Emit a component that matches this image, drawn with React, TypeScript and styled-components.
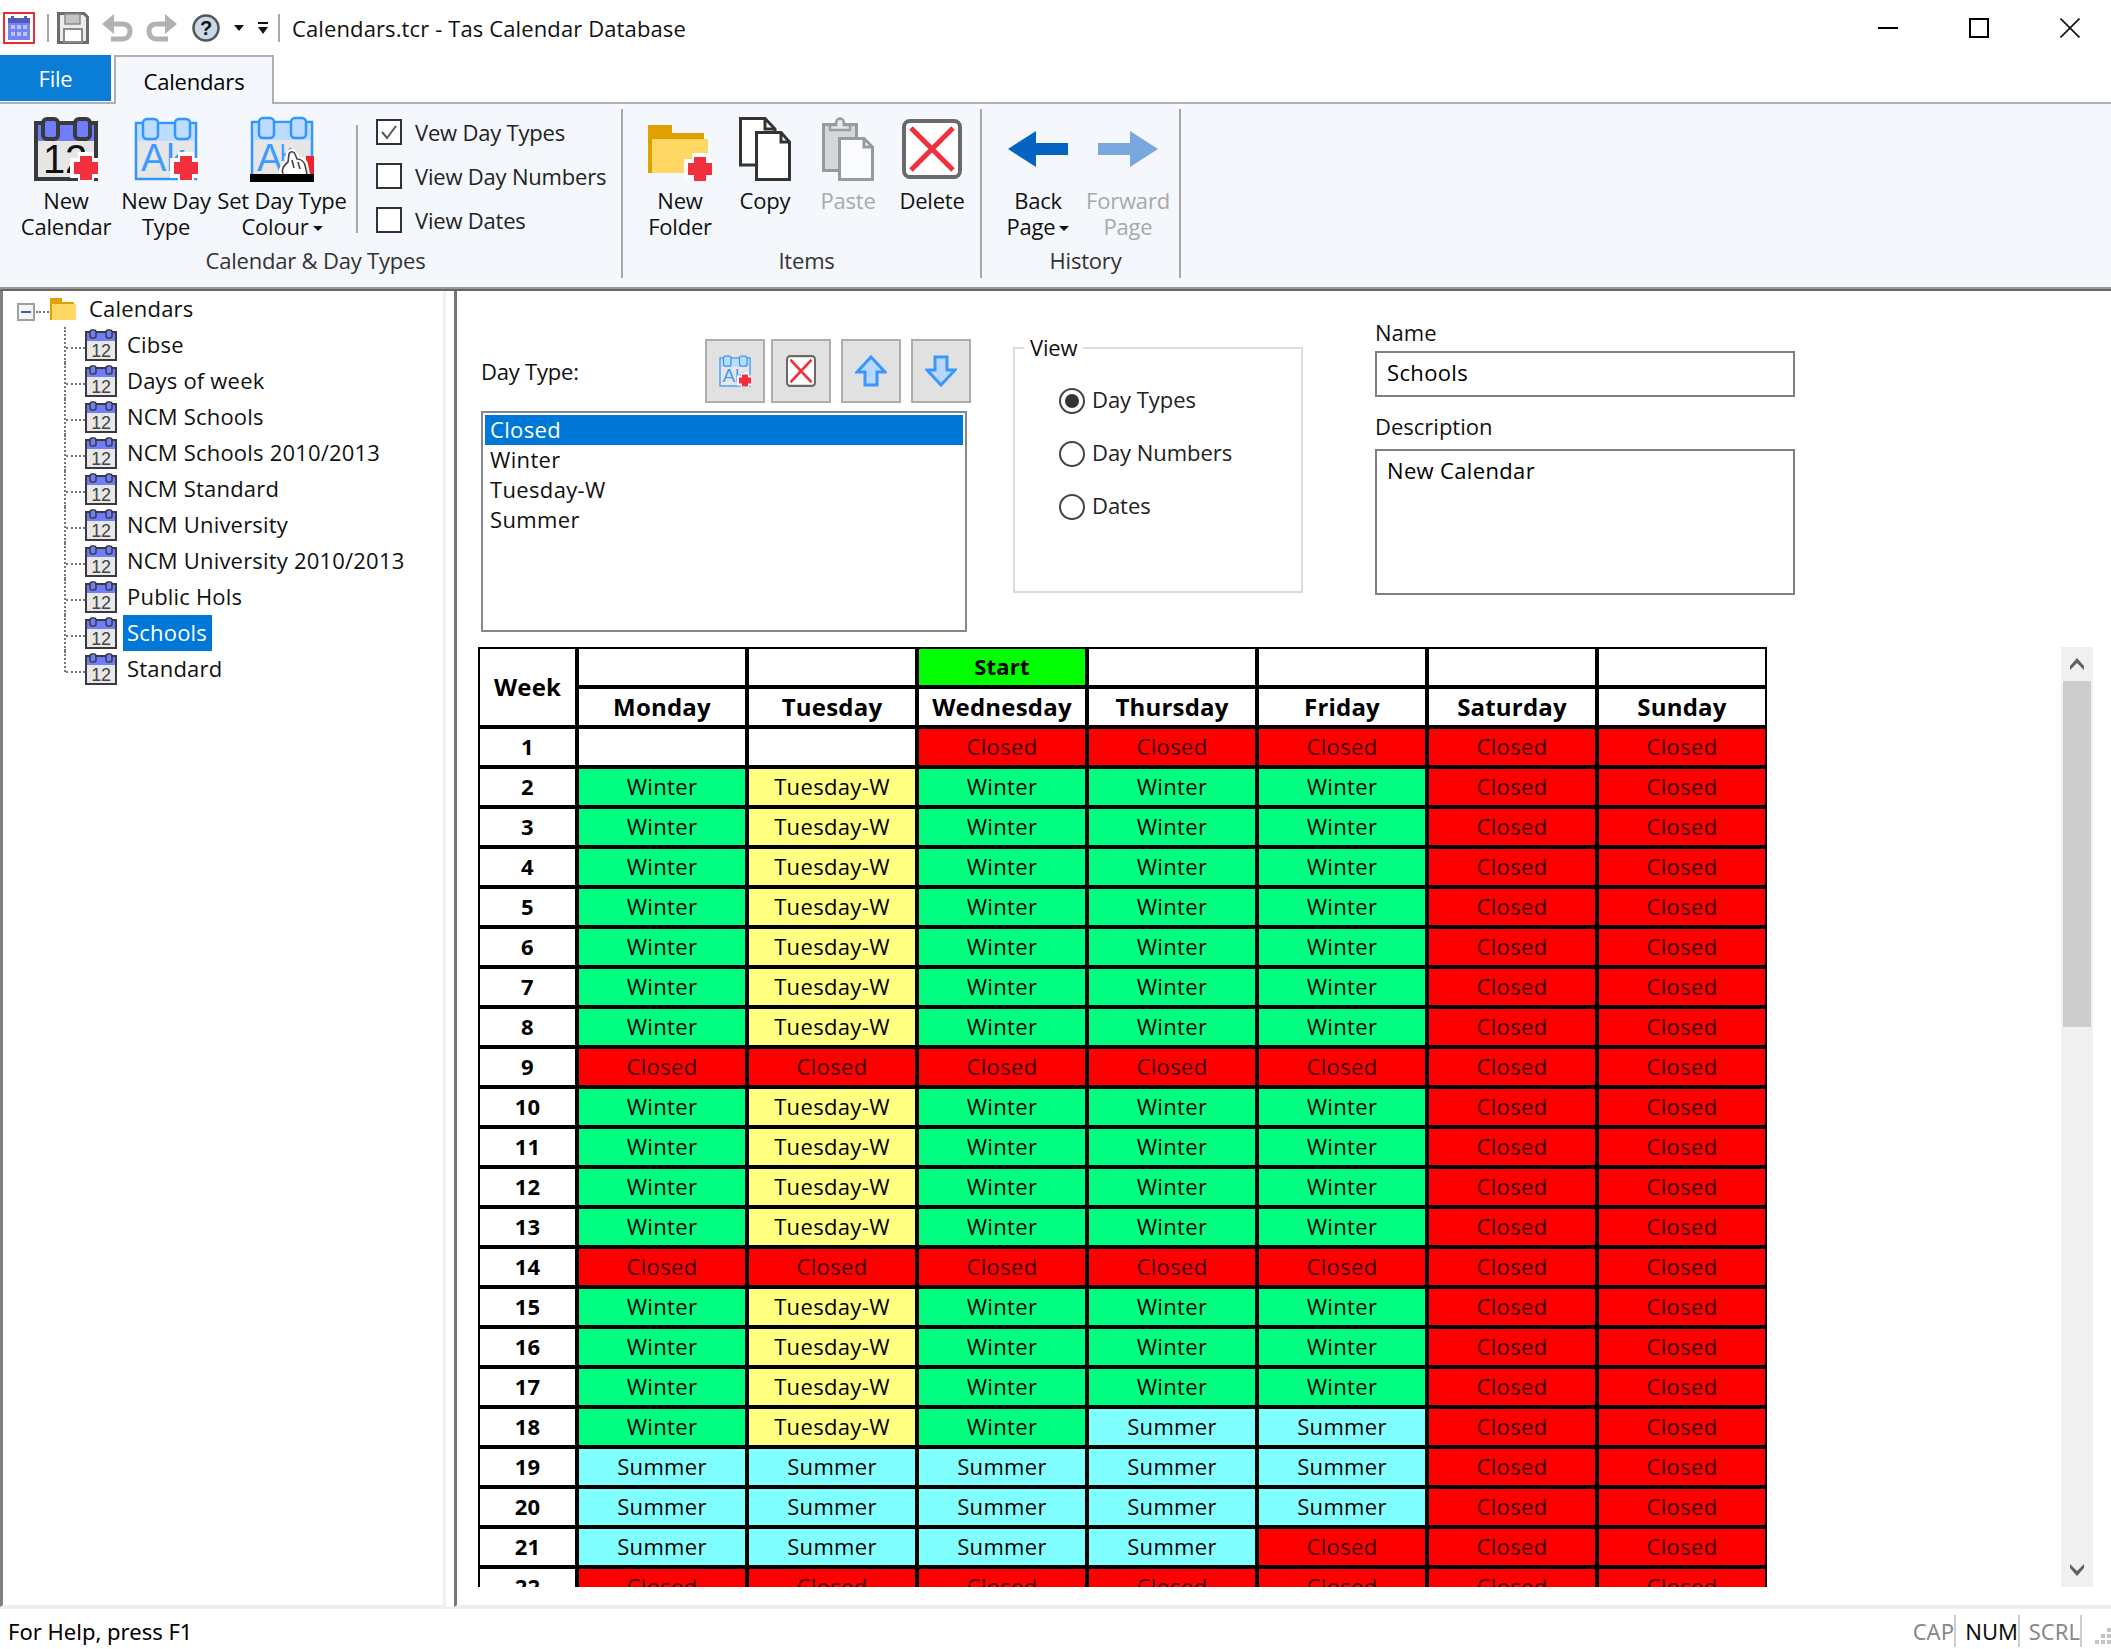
import { Fragment, ReactElement } from 'react';
import styled, { createGlobalStyle } from 'styled-components';

type DayKind = 'blank' | 'closed' | 'winter' | 'tuesday' | 'summer';

const DAY_COLOURS: Record<DayKind, string> = {
    blank: '#ffffff',
    closed: '#ff0000',
    winter: '#00ff80',
    tuesday: '#ffff80',
    summer: '#80ffff',
};

const DAY_LABELS: Record<DayKind, string> = {
    blank: '',
    closed: 'Closed',
    winter: 'Winter',
    tuesday: 'Tuesday-W',
    summer: 'Summer',
};

const WORK: DayKind[] = ['winter', 'tuesday', 'winter', 'winter', 'winter', 'closed', 'closed'];
const SHUT: DayKind[] = ['closed', 'closed', 'closed', 'closed', 'closed', 'closed', 'closed'];
const HOLS: DayKind[] = ['summer', 'summer', 'summer', 'summer', 'summer', 'closed', 'closed'];

const WEEKS: DayKind[][] = [
    ['blank', 'blank', 'closed', 'closed', 'closed', 'closed', 'closed'],
    WORK, WORK, WORK, WORK, WORK, WORK, WORK,
    SHUT,
    WORK, WORK, WORK, WORK,
    SHUT,
    WORK, WORK, WORK,
    ['winter', 'tuesday', 'winter', 'summer', 'summer', 'closed', 'closed'],
    HOLS, HOLS,
    ['summer', 'summer', 'summer', 'summer', 'closed', 'closed', 'closed'],
    SHUT,
];

const DAYS = ['Monday', 'Tuesday', 'Wednesday', 'Thursday', 'Friday', 'Saturday', 'Sunday'];

const CALENDARS = [
    'Cibse',
    'Days of week',
    'NCM Schools',
    'NCM Schools 2010/2013',
    'NCM Standard',
    'NCM University',
    'NCM University 2010/2013',
    'Public Hols',
    'Schools',
    'Standard',
];

const GlobalStyle = createGlobalStyle`
    html, body {
        margin: 0;
        padding: 0;
        background: #fff;
    }
    * {
        box-sizing: border-box;
    }
`;

const Page = styled.div`
    width: 2111px;
    height: 1649px;
    display: flex;
    flex-direction: column;
    overflow: hidden;
    background: #fff;
    color: #000;
    font-family: 'Open Sans', 'Noto Sans', sans-serif;
    font-size: 22px;
    letter-spacing: -0.2px;
`;

const TitleBar = styled.div`
    height: 55px;
    display: flex;
    align-items: center;
    padding-left: 3px;
`;

const TitleDivider = styled.div<{ $left: number }>`
    width: 2px;
    height: 28px;
    margin-left: ${p => p.$left}px;
    background: #a8a8a8;
`;

const QuickIcon = styled.div<{ $left: number }>`
    display: flex;
    margin-left: ${p => p.$left}px;
`;

const TitleText = styled.div`
    margin-left: 12px;
    color: #111;
    letter-spacing: 0.12px;
`;

const WindowButtons = styled.div`
    margin-left: auto;
    margin-right: 31px;
    display: flex;
    align-items: center;
    gap: 71px;
`;

const TabStrip = styled.div`
    height: 47px;
    display: flex;
    align-items: flex-end;
`;

const FileTab = styled.div`
    width: 111px;
    height: 46px;
    margin-bottom: 1px;
    display: flex;
    align-items: center;
    justify-content: center;
    background: #0a7ed6;
    color: #fff;
`;

const ActiveTab = styled.div`
    width: 160px;
    height: 49px;
    margin-left: 3px;
    margin-bottom: -2px;
    display: flex;
    align-items: center;
    justify-content: center;
    background: #f4f7fb;
    border: 2px solid #b0b0b0;
    border-bottom: none;
    position: relative;
    z-index: 1;
`;

const Ribbon = styled.div`
    height: 187px;
    display: flex;
    flex-shrink: 0;
    background: #f4f7fb;
    border-top: 2px solid #b0b0b0;
    border-bottom: 2px solid #999;
`;

const RibbonGroup = styled.div<{ $width: number }>`
    width: ${p => p.$width}px;
    height: 169px;
    margin-top: 5px;
    display: flex;
    flex-direction: column;
    border-right: 2px solid #a8a8a8;
`;

const GroupRow = styled.div<{ $left: number }>`
    height: 138px;
    display: flex;
    padding-left: ${p => p.$left}px;
`;

const GroupLabel = styled.div`
    height: 26px;
    line-height: 26px;
    padding-left: 10px;
    text-align: center;
    color: #333;
`;

const LargeButton = styled.div<{ $width: number; $disabled?: boolean }>`
    width: ${p => p.$width}px;
    padding-top: 8px;
    display: flex;
    flex-direction: column;
    align-items: center;
    color: ${p => (p.$disabled ? '#a9a9a9' : '#111')};
`;

const IconSlot = styled.div`
    height: 64px;
    display: flex;
    align-items: center;
    justify-content: center;
`;

const ButtonLabel = styled.div`
    margin-top: 6px;
    line-height: 26px;
    text-align: center;
    white-space: nowrap;
`;

const Caret = styled.span`
    display: inline-block;
    width: 0;
    height: 0;
    margin-left: 4px;
    vertical-align: 4px;
    border-left: 5px solid transparent;
    border-right: 5px solid transparent;
    border-top: 5px solid #111;
`;

const RibbonDivider = styled.div`
    width: 2px;
    height: 108px;
    margin: 16px 18px 0 6px;
    background: #a8a8a8;
`;

const CheckColumn = styled.div`
    padding-top: 10px;
    display: flex;
    flex-direction: column;
    gap: 18px;
`;

const CheckRow = styled.div`
    height: 26px;
    display: flex;
    align-items: center;
    gap: 13px;
    color: #222;
`;

const CheckBox = styled.div`
    width: 26px;
    height: 26px;
    display: flex;
    align-items: center;
    justify-content: center;
    background: #fff;
    border: 2px solid #333;
`;

const Body = styled.div`
    flex: 1;
    min-height: 0;
    display: flex;
    border-top: 2px solid #666;
`;

const TreePanel = styled.div`
    width: 446px;
    border-left: 3px solid #808080;
    border-right: 3px solid #f0f0f0;
    border-bottom: 2px solid #eee;
`;

const TreeRoot = styled.div`
    height: 36px;
    display: flex;
    align-items: center;
`;

const ExpandBox = styled.div`
    width: 18px;
    height: 18px;
    margin: 6px 0 0 14px;
    display: flex;
    align-items: center;
    justify-content: center;
    background: #f6f6f6;
    border: 2px solid #a0a0a0;

    &::after {
        content: '';
        width: 10px;
        height: 2px;
        background: #3f5fb0;
    }
`;

const RootDots = styled.div`
    width: 13px;
    margin: 6px 1px 0 1px;
    border-top: 2px dotted #777;
`;

const TreeText = styled.div<{ $selected?: boolean }>`
    height: 36px;
    line-height: 34px;
    padding: 0 5px 0 4px;
    white-space: nowrap;
    letter-spacing: 0.2px;
    background: ${p => (p.$selected ? '#0078d7' : 'transparent')};
    color: ${p => (p.$selected ? '#fff' : '#111')};
`;

const TreeRootText = styled(TreeText)`
    margin-left: 9px;
`;

const TreeRow = styled.div<{ $last?: boolean }>`
    position: relative;
    height: 36px;
    padding-left: 82px;
    display: flex;
    align-items: center;
    gap: 6px;

    &::before {
        content: '';
        position: absolute;
        left: 61px;
        top: 0;
        height: ${p => (p.$last ? '21px' : '36px')};
        border-left: 2px dotted #777;
    }

    &::after {
        content: '';
        position: absolute;
        left: 63px;
        top: 20px;
        width: 19px;
        border-top: 2px dotted #777;
    }
`;

const Splitter = styled.div`
    width: 8px;
    background: #fff;
`;

const DetailPane = styled.div`
    flex: 1;
    display: flex;
    flex-direction: column;
    border-left: 3px solid #777;
    border-bottom: 2px solid #eee;
`;

const TopRow = styled.div`
    height: 356px;
    flex-shrink: 0;
    display: flex;
    padding-left: 24px;
`;

const DayTypeColumn = styled.div`
    width: 486px;
    padding-top: 48px;
`;

const DayTypeTools = styled.div`
    display: flex;
    align-items: center;
    height: 64px;
    width: 500px;
`;

const DayTypeLabel = styled.div`
    width: 224px;
    color: #111;
`;

const ToolButton = styled.div<{ $left: number }>`
    width: 60px;
    height: 64px;
    margin-left: ${p => p.$left}px;
    display: flex;
    align-items: center;
    justify-content: center;
    background: #e1e1e1;
    border: 2px solid #adadad;
`;

const ListBox = styled.div`
    height: 221px;
    margin-top: 8px;
    padding: 2px;
    background: #fff;
    border: 2px solid #828790;
`;

const ListItem = styled.div<{ $selected?: boolean }>`
    height: 30px;
    line-height: 29px;
    padding-left: 5px;
    letter-spacing: 0.35px;
    background: ${p => (p.$selected ? '#0078d7' : 'transparent')};
    color: ${p => (p.$selected ? '#fff' : '#111')};
`;

const ViewGroup = styled.div`
    position: relative;
    width: 290px;
    height: 246px;
    margin: 56px 0 0 46px;
    padding: 25px 0 0 44px;
    border: 2px solid #dcdcdc;
`;

const ViewLegend = styled.div`
    position: absolute;
    left: 9px;
    top: -15px;
    padding: 0 6px;
    line-height: 26px;
    background: #fff;
    color: #111;
`;

const RadioRow = styled.div`
    height: 53px;
    display: flex;
    align-items: center;
    gap: 7px;
    color: #222;
    letter-spacing: -0.05px;
`;

const RadioText = styled.span`
    margin-top: -3px;
`;

const Radio = styled.div<{ $checked?: boolean }>`
    width: 26px;
    height: 26px;
    display: flex;
    align-items: center;
    justify-content: center;
    border: 2px solid #444;
    border-radius: 50%;

    &::after {
        content: '';
        width: 14px;
        height: 14px;
        border-radius: 50%;
        background: ${p => (p.$checked ? '#333' : 'transparent')};
    }
`;

const FieldColumn = styled.div`
    width: 420px;
    margin-left: 72px;
    padding-top: 27px;
`;

const FieldLabel = styled.div<{ $top?: number }>`
    height: 30px;
    line-height: 28px;
    margin-top: ${p => p.$top ?? 0}px;
    letter-spacing: 0px;
    color: #111;
`;

const NameBox = styled.div`
    height: 46px;
    margin-top: 3px;
    padding-left: 10px;
    line-height: 38px;
    letter-spacing: 0.35px;
    border: 2px solid #808080;
`;

const DescriptionBox = styled.div`
    height: 146px;
    margin-top: 7px;
    padding: 4px 0 0 10px;
    line-height: 30px;
    letter-spacing: 0.35px;
    border: 2px solid #808080;
`;

const GridRow = styled.div`
    flex: 1;
    min-height: 0;
    display: flex;
    padding-left: 21px;
`;

const GridClip = styled.div`
    width: 1289px;
    height: 940px;
    overflow: hidden;
`;

const WeekGrid = styled.div`
    display: grid;
    grid-template-columns: 95px repeat(7, 166px);
    grid-auto-rows: 36px;
    gap: 4px;
    padding: 2px;
    background: #000;
    font-size: 22px;
`;

const GridCell = styled.div<{ $bg?: string; $closed?: boolean }>`
    display: flex;
    align-items: center;
    justify-content: center;
    padding-bottom: 2px;
    background: ${p => p.$bg ?? '#fff'};
    color: ${p => (p.$closed ? '#3a0000' : '#000')};
    letter-spacing: 0.35px;
`;

const WeekNumber = styled(GridCell)`
    font-weight: 700;
    letter-spacing: 0.2px;
`;

const DayHeading = styled(GridCell)<{ $span?: boolean }>`
    font-size: 24px;
    font-weight: 700;
    letter-spacing: 0.2px;
    grid-row: ${p => (p.$span ? 'span 2' : 'auto')};
`;

const Scrollbar = styled.div`
    width: 32px;
    height: 940px;
    margin-left: 294px;
    display: flex;
    flex-direction: column;
    align-items: center;
    background: #f0f0f0;
`;

const ScrollArrow = styled.div<{ $bottom?: boolean }>`
    height: 34px;
    display: flex;
    align-items: center;
    justify-content: center;
    margin-top: ${p => (p.$bottom ? 'auto' : '0')};
`;

const ScrollThumb = styled.div`
    width: 28px;
    height: 346px;
    background: #cdcdcd;
`;

const StatusBar = styled.div`
    height: 42px;
    flex-shrink: 0;
    display: flex;
    align-items: center;
    padding: 3px 0 0 8px;
    border-top: 2px solid #f0f0f0;
    font-family: 'Noto Sans', sans-serif;
    font-size: 22px;
    letter-spacing: 0;
`;

const StatusPanes = styled.div`
    margin-left: auto;
    display: flex;
    align-items: center;
`;

const StatusPane = styled.div<{ $width: number; $active?: boolean }>`
    width: ${p => p.$width}px;
    height: 32px;
    line-height: 32px;
    text-align: right;
    white-space: nowrap;
    border-right: 2px solid #ccc;
    color: ${p => (p.$active ? '#111' : '#888')};
`;

const Grip = styled.div`
    display: flex;
    margin: 10px 0 0 13px;
`;

function RedPlus({ x, y }: { x: number; y: number }): ReactElement {
    // x, y is the middle of the cross
    return (
        <g transform={`translate(${x} ${y})`}>
            <path
                d="M-8 -16H8V-10H16V10H8V16H-8V10H-16V-10H-8Z"
                fill="#fff"
            />
            <path d="M-6 -12H6V-6H12V6H6V12H-6V6H-12V-6H-6Z" fill="#f0303c" />
        </g>
    );
}

function CalendarBase({ dark }: { dark: boolean }): ReactElement {
    const line = dark ? '#3a3a3e' : '#2f97ff';
    const head = dark ? '#6f7dfb' : '#bddcff';
    const width = dark ? 4 : 2.5;
    return (
        <>
            <rect x="2" y="6" width="60" height="56" fill="#e6e6e6" stroke={line} strokeWidth={width} />
            <rect x="4" y="8" width="56" height="16" fill={head} />
            <rect x="9" y="2" width="15" height="20" rx="4" fill={head} stroke={line} strokeWidth={width} />
            <rect x="41" y="2" width="15" height="20" rx="4" fill={head} stroke={line} strokeWidth={width} />
        </>
    );
}

function NewCalendarIcon(): ReactElement {
    return (
        <svg width="64" height="64" viewBox="0 0 64 64">
            <CalendarBase dark />
            <text x="9" y="56" fontFamily="Liberation Sans" fontSize="40" fill="#111">12</text>
            <RedPlus x={52} y={51} />
        </svg>
    );
}

function NewDayTypeIcon({ size = 64 }: { size?: number }): ReactElement {
    return (
        <svg width={size} height={size} viewBox="0 0 64 64">
            <CalendarBase dark={false} />
            <text x="7" y="54" fontFamily="Liberation Sans" fontSize="38" fill="#3d9bff">Ak</text>
            <RedPlus x={52} y={51} />
        </svg>
    );
}

function SetColourIcon(): ReactElement {
    return (
        <svg width="64" height="66" viewBox="0 0 64 66">
            <CalendarBase dark={false} />
            <text x="7" y="55" fontFamily="Liberation Sans" fontSize="38" fill="#3d9bff">A</text>
            <text x="30" y="45" fontFamily="Liberation Sans" fontSize="24" fill="#3d9bff">k</text>
            <path d="M56 40h8v18h-8z" fill="#f0202c" />
            <path d="M29 58c-1-5 2-10 6-13l1-9c2-4 8-4 10 0l3 4c5 1 8 4 9 8l2 10z" fill="#fff" />
            <path
                d="M33 58c-2-5 1-9 5-12l1-8c1-3 5-3 6 0l2 5c4 0 7 3 8 6l2 9M42 44l2 8M48 46l2 7"
                fill="none"
                stroke="#444"
                strokeWidth="1.6"
            />
            <rect x="0" y="58" width="64" height="8" fill="#000" />
        </svg>
    );
}

function TreeCalendarIcon(): ReactElement {
    return (
        <svg width="32" height="32" viewBox="0 0 32 32">
            <rect x="1" y="3" width="30" height="28" fill="#e8e8e8" stroke="#3a3a3e" strokeWidth="2" />
            <rect x="2" y="4" width="28" height="8" fill="#6f7dfb" />
            <rect x="5" y="1" width="6" height="8" rx="2" fill="#6f7dfb" stroke="#3a3a3e" strokeWidth="1.5" />
            <rect x="21" y="1" width="6" height="8" rx="2" fill="#6f7dfb" stroke="#3a3a3e" strokeWidth="1.5" />
            <text x="16" y="28" textAnchor="middle" fontFamily="Liberation Sans" fontSize="18" fill="#444">12</text>
        </svg>
    );
}

function TreeFolderIcon(): ReactElement {
    return (
        <svg width="26" height="22" viewBox="0 0 26 22">
            <path d="M0 0H12V4H24V22H0Z" fill="#e0a000" />
            <rect x="2" y="6" width="24" height="16" fill="#ffd764" />
        </svg>
    );
}

function FolderIcon(): ReactElement {
    return (
        <svg width="64" height="64" viewBox="0 0 64 64">
            <path d="M0 8H24V16H56V56H0Z" fill="#e0a000" />
            <rect x="4" y="22" width="56" height="34" fill="#ffd764" />
            <RedPlus x={52} y={52} />
        </svg>
    );
}

function CopyIcon(): ReactElement {
    return (
        <svg width="52" height="64" viewBox="0 0 52 64">
            <path d="M1.5 1.5H26L36 12V48H1.5Z" fill="#fff" stroke="#333" strokeWidth="3" />
            <path d="M26 1.5V12H36" fill="none" stroke="#333" strokeWidth="3" />
            <path d="M17.5 15.5H42L50.5 25V62.5H17.5Z" fill="#fff" stroke="#333" strokeWidth="3" />
            <path d="M42 15.5V25H50.5" fill="none" stroke="#333" strokeWidth="3" />
        </svg>
    );
}

function PasteIcon(): ReactElement {
    return (
        <svg width="52" height="64" viewBox="0 0 52 64">
            <rect x="1.5" y="7.5" width="33" height="46" fill="#d3d6db" stroke="#9a9a9a" strokeWidth="3" />
            <path d="M8 13V8H14C14 3 15 1.5 18 1.5S22 3 22 8H28V13Z" fill="#e4e6ea" stroke="#9a9a9a" strokeWidth="2.5" />
            <path d="M17.5 21.5H42L50.5 30V62.5H17.5Z" fill="#f9fbfe" stroke="#9a9a9a" strokeWidth="3" />
            <path d="M42 21.5V30H50.5" fill="none" stroke="#9a9a9a" strokeWidth="3" />
        </svg>
    );
}

function DeleteIcon({ width = 60, height = 60 }: { width?: number; height?: number }): ReactElement {
    return (
        <svg width={width} height={height} viewBox="0 0 60 60" preserveAspectRatio="none">
            <rect x="2" y="2" width="56" height="56" rx="6" fill="#fff" stroke="#6a6a6a" strokeWidth="4" />
            <path d="M9 9L51 51M51 9L9 51" stroke="#f0303c" strokeWidth="5" />
        </svg>
    );
}

function BackArrow({ flip, colour }: { flip?: boolean; colour: string }): ReactElement {
    return (
        <svg width="60" height="36" viewBox="0 0 60 36" style={flip ? { transform: 'scaleX(-1)' } : undefined}>
            <path d="M0 18L28 0V12H60V24H28V36Z" fill={colour} />
        </svg>
    );
}

function SmallArrow({ down }: { down?: boolean }): ReactElement {
    return (
        <svg width="32" height="32" viewBox="0 0 32 32" style={down ? { transform: 'scaleY(-1)' } : undefined}>
            <path d="M16 2L30 17H22V30H10V17H2Z" fill="#b8d8ff" stroke="#3a96ff" strokeWidth="3" />
        </svg>
    );
}

function TitleCalendar(): ReactElement {
    return (
        <svg width="32" height="32" viewBox="0 0 32 32">
            <rect x="1" y="1" width="30" height="30" fill="#fff" stroke="#ee2a33" strokeWidth="2" />
            <rect x="5" y="6" width="22" height="22" fill="#7583f5" />
            <rect x="5" y="6" width="22" height="5" fill="#4f5bc0" />
            <rect x="8" y="4" width="3" height="5" fill="#4f5bc0" />
            <rect x="21" y="4" width="3" height="5" fill="#4f5bc0" />
            <path d="M8 13h4v4H8zM14 13h4v4h-4zM20 13h4v4h-4zM8 20h4v4H8zM14 20h4v4h-4zM20 20h4v4h-4z" fill="#bcc3ff" />
        </svg>
    );
}

function SaveIcon(): ReactElement {
    return (
        <svg width="32" height="32" viewBox="0 0 32 32">
            <path d="M1.5 1.5H27L30.5 5V30.5H1.5Z" fill="#ebebeb" stroke="#6b6b6b" strokeWidth="3" />
            <rect x="8" y="2" width="15" height="10" fill="#c4c4c4" stroke="#8a8a8a" strokeWidth="1.5" />
            <rect x="7" y="17" width="18" height="13" fill="#fff" stroke="#8a8a8a" strokeWidth="2" />
        </svg>
    );
}

function UndoIcon({ flip }: { flip?: boolean }): ReactElement {
    return (
        <svg width="31" height="28" viewBox="0 0 31 28" style={flip ? { transform: 'scaleX(-1)' } : undefined}>
            <path d="M0 10L12 0V20Z" fill="#b2b2b2" />
            <path d="M10 10H20C26 10 28 13 28 17S26 25 20 25H9" fill="none" stroke="#b2b2b2" strokeWidth="5" />
        </svg>
    );
}

function HelpIcon(): ReactElement {
    return (
        <svg width="28" height="28" viewBox="0 0 28 28">
            <circle cx="14" cy="14" r="12.5" fill="#cbd8e8" stroke="#555" strokeWidth="2.5" />
            <text x="14" y="21" textAnchor="middle" fontFamily="Liberation Sans" fontWeight="700" fontSize="20" fill="#111">?</text>
        </svg>
    );
}

function DropCaret(): ReactElement {
    return (
        <svg width="10" height="6" viewBox="0 0 10 6">
            <path d="M0 0H10L5 6Z" fill="#111" />
        </svg>
    );
}

function CustomiseCaret(): ReactElement {
    return (
        <svg width="10" height="12" viewBox="0 0 10 12">
            <rect width="10" height="2" fill="#111" />
            <path d="M0 5H10L5 12Z" fill="#111" />
        </svg>
    );
}

function ScrollChevron({ down }: { down?: boolean }): ReactElement {
    return (
        <svg width="14" height="12" viewBox="0 0 14 12" style={down ? { transform: 'scaleY(-1)' } : undefined}>
            <path d="M7 0L14 8V12L7 5L0 12V8Z" fill="#606060" />
        </svg>
    );
}

function GripDots(): ReactElement {
    return (
        <svg width="16" height="16" viewBox="0 0 16 16">
            <path d="M12 0h4v4h-4zM6 6h4v4H6zM12 6h4v4h-4zM0 12h4v4H0zM6 12h4v4H6zM12 12h4v4h-4z" fill="#c4c4c4" />
        </svg>
    );
}

function App(): ReactElement {
    return (
        <Page>
            <GlobalStyle />
            <TitleBar>
                <TitleCalendar />
                <TitleDivider $left={12} />
                <QuickIcon $left={8}><SaveIcon /></QuickIcon>
                <QuickIcon $left={13}><UndoIcon /></QuickIcon>
                <QuickIcon $left={13}><UndoIcon flip /></QuickIcon>
                <QuickIcon $left={15}><HelpIcon /></QuickIcon>
                <QuickIcon $left={14}><DropCaret /></QuickIcon>
                <QuickIcon $left={14}><CustomiseCaret /></QuickIcon>
                <TitleDivider $left={10} />
                <TitleText>Calendars.tcr - Tas Calendar Database</TitleText>
                <WindowButtons>
                    <svg width="20" height="20" viewBox="0 0 20 20">
                        <rect y="9" width="20" height="2" fill="#000" />
                    </svg>
                    <svg width="20" height="20" viewBox="0 0 20 20">
                        <rect x="1" y="1" width="18" height="18" fill="none" stroke="#000" strokeWidth="2" />
                    </svg>
                    <svg width="20" height="20" viewBox="0 0 20 20">
                        <path d="M0.5 0.5L19.5 19.5M19.5 0.5L0.5 19.5" stroke="#111" strokeWidth="1.6" />
                    </svg>
                </WindowButtons>
            </TitleBar>

            <TabStrip>
                <FileTab>File</FileTab>
                <ActiveTab>Calendars</ActiveTab>
            </TabStrip>

            <Ribbon>
                <RibbonGroup $width={623}>
                    <GroupRow $left={14}>
                        <LargeButton $width={104}>
                            <IconSlot><NewCalendarIcon /></IconSlot>
                            <ButtonLabel>New<br />Calendar</ButtonLabel>
                        </LargeButton>
                        <LargeButton $width={96}>
                            <IconSlot><NewDayTypeIcon /></IconSlot>
                            <ButtonLabel>New Day<br />Type</ButtonLabel>
                        </LargeButton>
                        <LargeButton $width={136}>
                            <IconSlot><SetColourIcon /></IconSlot>
                            <ButtonLabel>Set Day Type<br />Colour<Caret /></ButtonLabel>
                        </LargeButton>
                        <RibbonDivider />
                        <CheckColumn>
                            <CheckRow>
                                <CheckBox>
                                    <svg width="18" height="16" viewBox="0 0 18 16">
                                        <path d="M2 8L7 14L16 2" fill="none" stroke="#555" strokeWidth="2" />
                                    </svg>
                                </CheckBox>
                                Vew Day Types
                            </CheckRow>
                            <CheckRow><CheckBox />View Day Numbers</CheckRow>
                            <CheckRow><CheckBox />View Dates</CheckRow>
                        </CheckColumn>
                    </GroupRow>
                    <GroupLabel>Calendar &amp; Day Types</GroupLabel>
                </RibbonGroup>

                <RibbonGroup $width={359}>
                    <GroupRow $left={17}>
                        <LargeButton $width={80}>
                            <IconSlot><FolderIcon /></IconSlot>
                            <ButtonLabel>New<br />Folder</ButtonLabel>
                        </LargeButton>
                        <LargeButton $width={90}>
                            <IconSlot><CopyIcon /></IconSlot>
                            <ButtonLabel>Copy</ButtonLabel>
                        </LargeButton>
                        <LargeButton $width={76} $disabled>
                            <IconSlot><PasteIcon /></IconSlot>
                            <ButtonLabel>Paste</ButtonLabel>
                        </LargeButton>
                        <LargeButton $width={92}>
                            <IconSlot><DeleteIcon /></IconSlot>
                            <ButtonLabel>Delete</ButtonLabel>
                        </LargeButton>
                    </GroupRow>
                    <GroupLabel>Items</GroupLabel>
                </RibbonGroup>

                <RibbonGroup $width={199}>
                    <GroupRow $left={11}>
                        <LargeButton $width={90}>
                            <IconSlot><BackArrow colour="#0563c1" /></IconSlot>
                            <ButtonLabel>Back<br />Page<Caret /></ButtonLabel>
                        </LargeButton>
                        <LargeButton $width={90} $disabled>
                            <IconSlot><BackArrow flip colour="#7aa7de" /></IconSlot>
                            <ButtonLabel>Forward<br />Page</ButtonLabel>
                        </LargeButton>
                    </GroupRow>
                    <GroupLabel>History</GroupLabel>
                </RibbonGroup>
            </Ribbon>

            <Body>
                <TreePanel>
                    <TreeRoot>
                        <ExpandBox />
                        <RootDots />
                        <TreeFolderIcon />
                        <TreeRootText>Calendars</TreeRootText>
                    </TreeRoot>
                    {CALENDARS.map((name, i) => (
                        <TreeRow key={name} $last={i === CALENDARS.length - 1}>
                            <TreeCalendarIcon />
                            <TreeText $selected={name === 'Schools'}>{name}</TreeText>
                        </TreeRow>
                    ))}
                </TreePanel>
                <Splitter />
                <DetailPane>
                    <TopRow>
                        <DayTypeColumn>
                            <DayTypeTools>
                                <DayTypeLabel>Day Type:</DayTypeLabel>
                                <ToolButton $left={0}><NewDayTypeIcon size={32} /></ToolButton>
                                <ToolButton $left={6}><DeleteIcon width={30} height={32} /></ToolButton>
                                <ToolButton $left={10}><SmallArrow /></ToolButton>
                                <ToolButton $left={10}><SmallArrow down /></ToolButton>
                            </DayTypeTools>
                            <ListBox>
                                <ListItem $selected>Closed</ListItem>
                                <ListItem>Winter</ListItem>
                                <ListItem>Tuesday-W</ListItem>
                                <ListItem>Summer</ListItem>
                            </ListBox>
                        </DayTypeColumn>
                        <ViewGroup>
                            <ViewLegend>View</ViewLegend>
                            <RadioRow><Radio $checked /><RadioText>Day Types</RadioText></RadioRow>
                            <RadioRow><Radio /><RadioText>Day Numbers</RadioText></RadioRow>
                            <RadioRow><Radio /><RadioText>Dates</RadioText></RadioRow>
                        </ViewGroup>
                        <FieldColumn>
                            <FieldLabel>Name</FieldLabel>
                            <NameBox>Schools</NameBox>
                            <FieldLabel $top={15}>Description</FieldLabel>
                            <DescriptionBox>New Calendar</DescriptionBox>
                        </FieldColumn>
                    </TopRow>
                    <GridRow>
                        <GridClip>
                            <WeekGrid>
                                <DayHeading $span>Week</DayHeading>
                                <GridCell />
                                <GridCell />
                                <WeekNumber $bg="#00ff00">Start</WeekNumber>
                                <GridCell />
                                <GridCell />
                                <GridCell />
                                <GridCell />
                                {DAYS.map(day => (
                                    <DayHeading key={day}>{day}</DayHeading>
                                ))}
                                {WEEKS.map((week, w) => (
                                    <Fragment key={w}>
                                        <WeekNumber>{w + 1}</WeekNumber>
                                        {week.map((kind, d) => (
                                            <GridCell key={d} $bg={DAY_COLOURS[kind]} $closed={kind === 'closed'}>
                                                {DAY_LABELS[kind]}
                                            </GridCell>
                                        ))}
                                    </Fragment>
                                ))}
                            </WeekGrid>
                        </GridClip>
                        <Scrollbar>
                            <ScrollArrow><ScrollChevron /></ScrollArrow>
                            <ScrollThumb />
                            <ScrollArrow $bottom><ScrollChevron down /></ScrollArrow>
                        </Scrollbar>
                    </GridRow>
                </DetailPane>
            </Body>

            <StatusBar>
                For Help, press F1
                <StatusPanes>
                    <StatusPane $width={50}>CAP</StatusPane>
                    <StatusPane $width={64} $active>NUM</StatusPane>
                    <StatusPane $width={62}>SCRL</StatusPane>
                    <Grip><GripDots /></Grip>
                </StatusPanes>
            </StatusBar>
        </Page>
    );
}

export default App;
